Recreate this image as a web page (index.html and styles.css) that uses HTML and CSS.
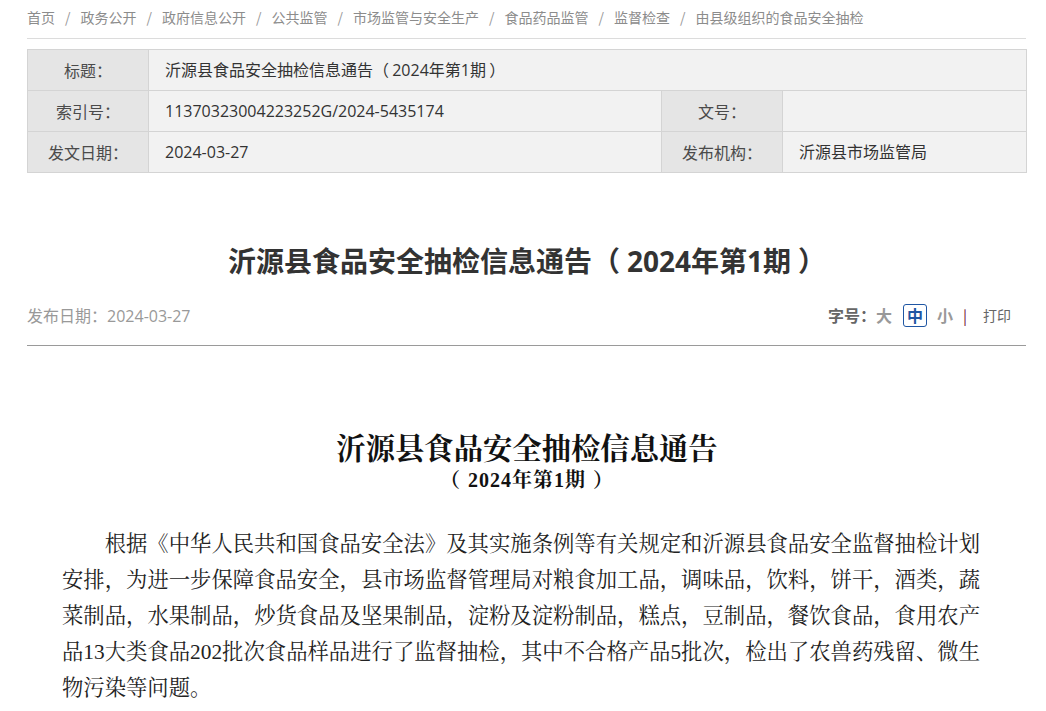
FILE: index.html
```html
<!DOCTYPE html>
<html lang="zh-CN">
<head>
<meta charset="utf-8">
<title>沂源县食品安全抽检信息通告（2024年第1期）</title>
<link rel="stylesheet" href="styles.css">
</head>
<body>
<div class="page">
  <nav class="crumbs">
    <a href="#">首页</a><span class="sep">/</span><a href="#">政务公开</a><span class="sep">/</span><a href="#">政府信息公开</a><span class="sep">/</span><a href="#">公共监管</a><span class="sep">/</span><a href="#">市场监管与安全生产</a><span class="sep">/</span><a href="#">食品药品监管</a><span class="sep">/</span><a href="#">监督检查</a><span class="sep">/</span><a href="#">由县级组织的食品安全抽检</a>
  </nav>

  <table class="info">
    <colgroup>
      <col class="c-label"><col class="c-value"><col class="c-label"><col class="c-value2">
    </colgroup>
    <tr>
      <th>标题<span class="colon">：</span></th>
      <td colspan="3">沂源县食品安全抽检信息通告<span class="lp">（</span>2024年第1期<span class="rp">）</span></td>
    </tr>
    <tr>
      <th>索引号<span class="colon">：</span></th>
      <td>11370323004223252G/2024-5435174</td>
      <th>文号<span class="colon">：</span></th>
      <td></td>
    </tr>
    <tr>
      <th>发文日期<span class="colon">：</span></th>
      <td>2024-03-27</td>
      <th>发布机构<span class="colon">：</span></th>
      <td>沂源县市场监管局</td>
    </tr>
  </table>

  <h1 class="headline">沂源县食品安全抽检信息通告<span class="lp">（</span>2024年第1期<span class="rp">）</span></h1>

  <div class="meta">
    <span class="date">发布日期<span class="colon">：</span>2024-03-27</span>
    <div class="tools">
      <span class="size-label">字号<span class="colon">：</span></span>
      <a href="#" class="size big">大</a>
      <a href="#" class="size active">中</a>
      <a href="#" class="size small">小</a>
      <span class="bar">|</span>
      <a href="#" class="print">打印</a>
    </div>
  </div>

  <article class="content">
    <h2 class="doc-title">沂源县食品安全抽检信息通告</h2>
    <p class="doc-sub"><span class="lp">（</span>2024年第1期<span class="rp">）</span></p>
    <p class="para">根据《中华人民共和国食品安全法》及其实施条例等有关规定和沂源县食品安全监督抽检计划安排，为进一步保障食品安全，县市场监督管理局对粮食加工品，调味品，饮料，饼干，酒类，蔬菜制品，水果制品，炒货食品及坚果制品，淀粉及淀粉制品，糕点，豆制品，餐饮食品，食用农产品13大类食品202批次食品样品进行了监督抽检，其中不合格产品5批次，检出了农兽药残留、微生物污染等问题。</p>
  </article>
</div>
</body>
</html>
```

FILE: styles.css
```css
html, body {
  margin: 0;
  padding: 0;
  background: #fff;
}

body {
  font-family: "Open Sans", "Noto Sans CJK SC", sans-serif;
  color: #333;
  text-spacing-trim: space-all;
}

a {
  text-decoration: none;
  color: inherit;
}

.page {
  width: 1000px;
  margin-left: 27px;
}

/* centred full-width colon, as in the original CJK face */
.colon {
  font-family: "Noto Sans CJK TC", "Noto Sans CJK SC", sans-serif;
}

/* the original face sets full-width brackets with air on both sides */
.lp {
  padding-right: 0.25em;
}

.rp {
  padding-left: 0.25em;
}

.info .lp {
  padding-right: 0.2em;
}

.info .rp {
  padding-left: 0.2em;
}

/* breadcrumb */
.crumbs {
  height: 39px;
  box-sizing: border-box;
  padding-top: 6px;
  line-height: 22px;
  font-family: "Noto Sans CJK SC", sans-serif;
  font-size: 14px;
  color: #8c8c8c;
  border-bottom: 1px solid #dcdcdc;
  width: 999px;
  white-space: nowrap;
}

.crumbs .sep {
  display: inline-block;
  margin: 0 10px;
  color: #999;
}

/* info table */
.info {
  margin-top: 10px;
  width: 1000px;
  border-collapse: collapse;
  table-layout: fixed;
  font-size: 16px;
}

.c-label { width: 121px; }
.c-value { width: 513px; }
.c-value2 { width: 244px; }

.info th,
.info td {
  height: 40px;
  border: 1px solid #d4d4d4;
  padding: 0;
  line-height: 20px;
}

.info th {
  background: #e5e5e5;
  font-weight: normal;
  color: #4a4a4a;
  text-align: center;
}

.info td {
  background: #f2f2f2;
  color: #333;
  padding-left: 16px;
  text-align: left;
}

/* headline */
.headline {
  margin: 68px 0 0;
  text-align: center;
  font-size: 28px;
  line-height: 40px;
  font-weight: bold;
  color: #333;
}

.meta {
  margin-top: 22px;
  display: flex;
  justify-content: space-between;
  align-items: center;
  height: 24px;
  padding-bottom: 18px;
  border-bottom: 1px solid #9a9a9a;
  width: 999px;
}

.date {
  font-size: 16px;
  color: #999;
  line-height: 24px;
}

.tools {
  display: flex;
  align-items: center;
  padding-right: 15px;
  font-size: 16px;
  font-family: "Noto Sans CJK SC", sans-serif;
}

.size-label {
  font-weight: bold;
  color: #666;
}

.size {
  color: #999;
  font-weight: bold;
}

.size.big {
  margin-right: 11px;
}

.size.active {
  color: #1f56a3;
  border: 1px solid #1f56a3;
  border-radius: 3px;
  width: 22px;
  height: 21px;
  line-height: 21px;
  text-align: center;
  margin-right: 10px;
}

.bar {
  color: #6e1439;
  margin-left: 10px;
  margin-right: 16px;
  font-size: 15px;
}

.print {
  font-size: 14px;
  color: #666;
  font-weight: normal;
}

/* article content */
.content {
  padding-left: 35px;
}

.doc-title {
  margin: 80px 0 0 -35px;
  width: 1000px;
  text-align: center;
  font-family: "Noto Serif CJK SC", "Liberation Serif", serif;
  font-size: 29.33px;
  line-height: 40px;
  font-weight: bold;
  color: #111;
}

.doc-sub {
  margin: 0 0 0 -35px;
  width: 1000px;
  text-align: center;
  font-family: "Liberation Serif", "Noto Serif CJK SC", serif;
  font-size: 20px;
  line-height: 28px;
  font-weight: bold;
  color: #111;
  letter-spacing: 1px;
}

.doc-sub .lp {
  padding-right: 0.35em;
}

.doc-sub .rp {
  padding-left: 0.35em;
}

.para {
  margin: 32px 0 0;
  width: 918px;
  font-family: "Liberation Serif", "Noto Serif CJK SC", serif;
  font-size: 21.33px;
  line-height: 36px;
  text-indent: 2em;
  text-align: justify;
  color: #222;
}
```
